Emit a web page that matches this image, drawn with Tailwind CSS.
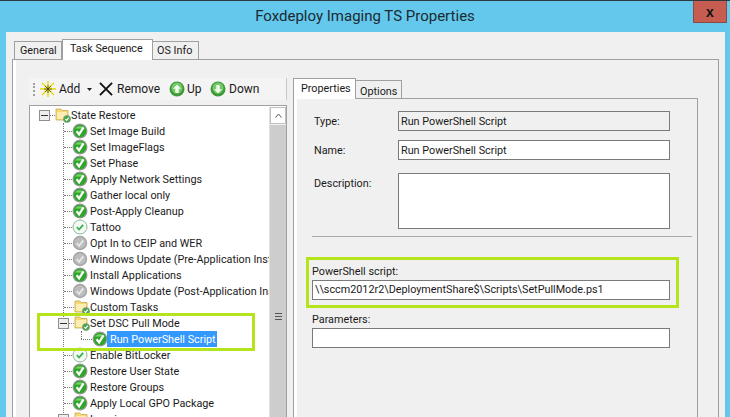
<!DOCTYPE html>
<html lang="en">
  <head>
    <meta charset="UTF-8" />
    <title>Foxdeploy Imaging TS Properties</title>
    <script src="https://cdn.jsdelivr.net/npm/@tailwindcss/browser@4"></script>
  </head>
  <body class="w-[730px] h-[417px] overflow-hidden bg-[#63c8eb] font-['Roboto',sans-serif] text-[10.8px] text-[#1a1a1a]">
    <svg class="hidden">
      <symbol id="ok" viewBox="0 0 16 16">
        <circle cx="8" cy="8" r="7.5" fill="#9a9a9a" />
        <circle cx="8" cy="8" r="6.3" fill="#2fa52a" />
        <path d="M3 5.5a6 5 0 0 1 10 0z" fill="#7fd36f" />
        <path d="M4.6 8.2l2.5 3.2 4.4-7" fill="none" stroke="#fff" stroke-width="2.2" />
      </symbol>
      <symbol id="thin" viewBox="0 0 16 16">
        <circle cx="8" cy="8" r="7" fill="#f4fbf4" stroke="#8fb79a" />
        <path d="M4.8 8l2.3 2.5 4-4.6" fill="none" stroke="#34b34a" stroke-width="1.8" />
      </symbol>
      <symbol id="grey" viewBox="0 0 16 16">
        <circle cx="8" cy="8" r="7.2" fill="#a3a3a3" />
        <circle cx="8" cy="8" r="5.8" fill="#bdbdbd" />
        <path d="M4.8 8.2l2.3 2.6 4.2-5.4" fill="none" stroke="#e6e6e6" stroke-width="2" />
      </symbol>
      <symbol id="folder" viewBox="0 0 16 16">
        <path d="M1 2h5l1 1.500h6V13H1z" fill="#f6d978" stroke="#c9a94f" stroke-width=".8" />
        <path d="M2 5h10v7H2z" fill="#fbeeb0" />
        <circle cx="12" cy="12" r="3.600" fill="#46a84a" stroke="#8d9a8d" stroke-width=".7" />
        <path d="M10.300 12l1.300 1.400 2.200-2.800" fill="none" stroke="#fff" stroke-width="1.100" />
      </symbol>
    </svg>

    <div class="relative h-full border-t border-t-[#2c3a40]">
      <!-- title bar -->
      <div class="h-[31px] flex items-center justify-center text-[15px] text-[#1c2b33]">Foxdeploy Imaging TS Properties</div>
      <div class="absolute right-[3px] top-0 w-[34px] h-[22px] bg-[#c75c50] border border-[#8a4a44] border-t-0 flex items-center justify-center text-[14px] leading-none font-bold font-['Liberation_Sans',sans-serif] text-[#111]">x</div>

      <!-- client area -->
      <div class="h-[385px] ml-[6px] mr-[5px] bg-[#f0f0f0] px-[6px] pt-[8px]">
        <!-- outer tabs -->
        <div class="flex h-[19px] items-end pl-[2px] relative z-10">
          <div class="h-[18px] w-[48px] border border-[#a0a0a0] border-b-0 bg-[#f0f0f0] pl-[5px] leading-[18px]">General</div>
          <div class="h-[21px] w-[91px] border border-[#a0a0a0] border-b-0 bg-white pl-[7px] leading-[17px] mb-[-1px]">Task Sequence</div>
          <div class="h-[18px] w-[46px] border border-[#a0a0a0] border-b-0 border-l-0 bg-[#f0f0f0] pl-[4px] leading-[18px]">OS Info</div>
        </div>
        <div class="h-[360px] border border-[#a0a0a0] border-b-0 bg-white pl-[3px] w-[707px]">
          <div class="h-full bg-[#f0f0f0] pt-[18px] pl-[13px] flex">
            <!-- left: toolbar and tree -->
            <div class="w-[258px]">
              <div class="h-[22px] bg-[#f4f4f4] border-r border-[#c8c8c8] flex items-center pl-[4px] text-[12px]">
                <div class="w-[2px] h-[13px] border-l-2 border-dotted border-[#a0a0a0] mr-[5px]"></div>
                <svg class="w-[16px] h-[16px] shrink-0" viewBox="0 0 16 16"><path d="M8 0v16M0 8h16M2 2l12 12M14 2L2 14" stroke="#e8d800" stroke-width="1.3" /><path d="M8 4v8M4 8h8M5 5l6 6M11 5l-6 6" stroke="#3a3a10" stroke-width=".7" /></svg>
                <span class="ml-[3px] w-[22px] leading-[26px]">Add</span>
                <svg class="ml-[6px] w-[5px] h-[3px] shrink-0" viewBox="0 0 5 3"><path d="M0 0h5L2.5 3z" fill="#222" /></svg>
                <svg class="ml-[7px] w-[14px] h-[14px] shrink-0" viewBox="0 0 15 15"><path d="M1 1l13 13M14 1L1 14" stroke="#111" stroke-width="2" /></svg>
                <span class="ml-[4px] w-[44px] leading-[26px]">Remove</span>
                <svg class="ml-[8px] w-[16px] h-[16px] shrink-0" viewBox="0 0 16 16"><circle cx="8" cy="8" r="7.5" fill="#3f9a3a" /><circle cx="8" cy="7" r="5.5" fill="#77c86a" /><path d="M8 3.500l4 4.200H9.700V12H6.300V7.700H4z" fill="#eefaea" /></svg>
                <span class="ml-[2px] w-[16px] leading-[26px]">Up</span>
                <svg class="ml-[7px] w-[16px] h-[16px] shrink-0" viewBox="0 0 16 16"><circle cx="8" cy="8" r="7.5" fill="#3f9a3a" /><circle cx="8" cy="7" r="5.5" fill="#77c86a" /><path d="M8 12.500L4 8.300h2.300V4h3.400v4.300H12z" fill="#eefaea" /></svg>
                <span class="ml-[3px] leading-[26px]">Down</span>
              </div>
              <!-- tree -->
              <div class="mt-[5px] h-[320px] border border-[#a0a0a0] bg-white pt-[1px] flex overflow-hidden">
                <div class="relative w-[239px] overflow-hidden whitespace-nowrap leading-[18px] [&_span]:translate-y-px">
                  <!-- guide line from State Restore down through its children -->
                  <div class="absolute left-[33px] top-[16px] h-[308px] border-l border-dotted border-[#777]"></div>

                  <div class="h-4 flex items-center pl-[9px]">
                    <div class="w-[11px] h-[11px] shrink-0 border border-[#8e8e8e] bg-[#eee] flex items-center justify-center"><div class="w-[7px] h-[1px] bg-[#333]"></div></div>
                    <div class="w-[5px] shrink-0 border-t border-dotted border-[#777]"></div>
                    <svg class="w-4 h-4 shrink-0"><use href="#folder" /></svg>
                    <span>State Restore</span>
                  </div>

                  <div class="h-4 flex items-center pl-[34px]"><div class="w-[8px] shrink-0 border-t border-dotted border-[#777]"></div><svg class="w-4 h-4 shrink-0"><use href="#ok" /></svg><span class="ml-[2px]">Set Image Build</span></div>
                  <div class="h-4 flex items-center pl-[34px]"><div class="w-[8px] shrink-0 border-t border-dotted border-[#777]"></div><svg class="w-4 h-4 shrink-0"><use href="#ok" /></svg><span class="ml-[2px]">Set ImageFlags</span></div>
                  <div class="h-4 flex items-center pl-[34px]"><div class="w-[8px] shrink-0 border-t border-dotted border-[#777]"></div><svg class="w-4 h-4 shrink-0"><use href="#ok" /></svg><span class="ml-[2px]">Set Phase</span></div>
                  <div class="h-4 flex items-center pl-[34px]"><div class="w-[8px] shrink-0 border-t border-dotted border-[#777]"></div><svg class="w-4 h-4 shrink-0"><use href="#ok" /></svg><span class="ml-[2px]">Apply Network Settings</span></div>
                  <div class="h-4 flex items-center pl-[34px]"><div class="w-[8px] shrink-0 border-t border-dotted border-[#777]"></div><svg class="w-4 h-4 shrink-0"><use href="#ok" /></svg><span class="ml-[2px]">Gather local only</span></div>
                  <div class="h-4 flex items-center pl-[34px]"><div class="w-[8px] shrink-0 border-t border-dotted border-[#777]"></div><svg class="w-4 h-4 shrink-0"><use href="#ok" /></svg><span class="ml-[2px]">Post-Apply Cleanup</span></div>
                  <div class="h-4 flex items-center pl-[34px]"><div class="w-[8px] shrink-0 border-t border-dotted border-[#777]"></div><svg class="w-4 h-4 shrink-0"><use href="#thin" /></svg><span class="ml-[2px]">Tattoo</span></div>
                  <div class="h-4 flex items-center pl-[34px]"><div class="w-[8px] shrink-0 border-t border-dotted border-[#777]"></div><svg class="w-4 h-4 shrink-0"><use href="#grey" /></svg><span class="ml-[2px]">Opt In to CEIP and WER</span></div>
                  <div class="h-4 flex items-center pl-[34px]"><div class="w-[8px] shrink-0 border-t border-dotted border-[#777]"></div><svg class="w-4 h-4 shrink-0"><use href="#grey" /></svg><span class="ml-[2px]">Windows Update (Pre-Application Inst</span></div>
                  <div class="h-4 flex items-center pl-[34px]"><div class="w-[8px] shrink-0 border-t border-dotted border-[#777]"></div><svg class="w-4 h-4 shrink-0"><use href="#ok" /></svg><span class="ml-[2px]">Install Applications</span></div>
                  <div class="h-4 flex items-center pl-[34px]"><div class="w-[8px] shrink-0 border-t border-dotted border-[#777]"></div><svg class="w-4 h-4 shrink-0"><use href="#grey" /></svg><span class="ml-[2px]">Windows Update (Post-Application Ins</span></div>
                  <div class="h-4 flex items-center pl-[34px]"><div class="w-[10px] shrink-0 border-t border-dotted border-[#777]"></div><svg class="w-4 h-4 shrink-0"><use href="#folder" /></svg><span>Custom Tasks</span></div>

                  <div class="h-4 flex items-center pl-[28px] relative">
                    <div class="w-[11px] h-[11px] shrink-0 border border-[#8e8e8e] bg-[#eee] flex items-center justify-center"><div class="w-[7px] h-[1px] bg-[#333]"></div></div>
                    <div class="w-[5px] shrink-0 border-t border-dotted border-[#777]"></div>
                    <svg class="w-4 h-4 shrink-0"><use href="#folder" /></svg>
                    <span>Set DSC Pull Mode</span>
                  </div>
                  <div class="h-4 flex items-center pl-[51px] relative">
                    <div class="absolute left-[51px] top-0 h-[8px] border-l border-dotted border-[#777]"></div>
                    <div class="w-[11px] shrink-0 border-t border-dotted border-[#777]"></div>
                    <svg class="w-4 h-4 shrink-0"><use href="#ok" /></svg>
                    <span class="w-[110px] ml-[-1px] bg-[#3399ff] text-white h-4 leading-[18px] pl-[3px] translate-y-0!">Run PowerShell Script</span>
                  </div>

                  <div class="h-4 flex items-center pl-[34px]"><div class="w-[8px] shrink-0 border-t border-dotted border-[#777]"></div><svg class="w-4 h-4 shrink-0"><use href="#thin" /></svg><span class="ml-[2px]">Enable BitLocker</span></div>
                  <div class="h-4 flex items-center pl-[34px]"><div class="w-[8px] shrink-0 border-t border-dotted border-[#777]"></div><svg class="w-4 h-4 shrink-0"><use href="#ok" /></svg><span class="ml-[2px]">Restore User State</span></div>
                  <div class="h-4 flex items-center pl-[34px]"><div class="w-[8px] shrink-0 border-t border-dotted border-[#777]"></div><svg class="w-4 h-4 shrink-0"><use href="#ok" /></svg><span class="ml-[2px]">Restore Groups</span></div>
                  <div class="h-4 flex items-center pl-[34px]"><div class="w-[8px] shrink-0 border-t border-dotted border-[#777]"></div><svg class="w-4 h-4 shrink-0"><use href="#ok" /></svg><span class="ml-[2px]">Apply Local GPO Package</span></div>
                  <div class="h-4 flex items-center pl-[28px] relative">
                    <div class="w-[11px] h-[11px] shrink-0 border border-[#8e8e8e] bg-[#eee]"></div>
                    <div class="w-[5px] shrink-0 border-t border-dotted border-[#777]"></div>
                    <svg class="w-4 h-4 shrink-0"><use href="#folder" /></svg>
                    <span>Imaging</span>
                  </div>
                </div>
                <!-- scrollbar -->
                <div class="w-[17px] bg-[#f0f0f0] border-l border-[#e0e0e0]">
                  <div class="h-[17px] bg-white border border-[#c0c0c0] flex items-center justify-center">
                    <svg class="w-[7px] h-[5px]" viewBox="0 0 7 5"><path d="M.5 4.500l3-3.500 3 3.500" fill="none" stroke="#555" /></svg>
                  </div>
                  <div class="mt-[1px] h-[310px] bg-[#cdcdcd] flex items-center justify-center">
                    <div class="mt-[72px] w-[7px] h-[7px] border-y border-[#555] flex items-center"><div class="w-full h-[1px] bg-[#555]"></div></div>
                  </div>
                </div>
              </div>
            </div>

            <!-- right: step properties -->
            <div class="ml-[6px] w-[405px]">
              <div class="flex h-[20px] items-end relative z-10">
                <div class="h-[21px] w-[63px] border border-[#a0a0a0] border-b-0 bg-white pl-[7px] leading-[19px] mb-[-1px]">Properties</div>
                <div class="h-[18px] w-[46px] border border-[#a0a0a0] border-b-0 border-l-0 bg-[#f0f0f0] pl-[4px] leading-[21px]">Options</div>
              </div>
              <div class="h-[320px] border border-[#a0a0a0] border-b-0 bg-white pl-[3px]">
                <div class="h-full bg-[#f0f0f0] pt-[12px] pl-[15px] pr-[6px]">
                  <div class="flex items-center h-[20px]"><span class="w-[86px] pl-[2px] pt-[2px]">Type:</span><div class="w-[272px] h-[20px] border border-[#7a7a7a] bg-[#f0f0f0] pl-[2px] leading-[19px]">Run PowerShell Script</div></div>
                  <div class="flex items-center h-[20px] mt-[9px]"><span class="w-[86px] pl-[2px] pt-[2px]">Name:</span><div class="w-[272px] h-[20px] border border-[#7a7a7a] bg-white pl-[2px] leading-[19px]">Run PowerShell Script</div></div>
                  <div class="flex mt-[13px]"><span class="w-[86px] pl-[2px] mt-[3px]">Description:</span><div class="w-[272px] h-[56px] border border-[#7a7a7a] bg-white"></div></div>
                  <div class="mt-[7px] h-[1px] bg-[#a8a8a8] w-[380px]"></div>
                  <div class="mt-[27px] leading-[16px]">PowerShell script:</div>
                  <div class="w-[358px] h-[20px] border border-[#7a7a7a] bg-white pl-[2px] leading-[18px]">\\sccm2012r2\DeploymentShare$\Scripts\SetPullMode.ps1</div>
                  <div class="mt-[12px] leading-[16px]">Parameters:</div>
                  <div class="w-[358px] h-[20px] border border-[#7a7a7a] bg-white"></div>
                </div>
              </div>
            </div>
          </div>
        </div>
      </div>

      <!-- green callouts drawn on top of the shot -->
      <div class="absolute left-[37px] top-[312px] w-[218px] h-[38px] border-[3px] border-[#b5e31c]"></div>
      <div class="absolute left-[306px] top-[256px] w-[373px] h-[51px] border-[3px] border-[#b5e31c]"></div>
    </div>
  </body>
</html>
